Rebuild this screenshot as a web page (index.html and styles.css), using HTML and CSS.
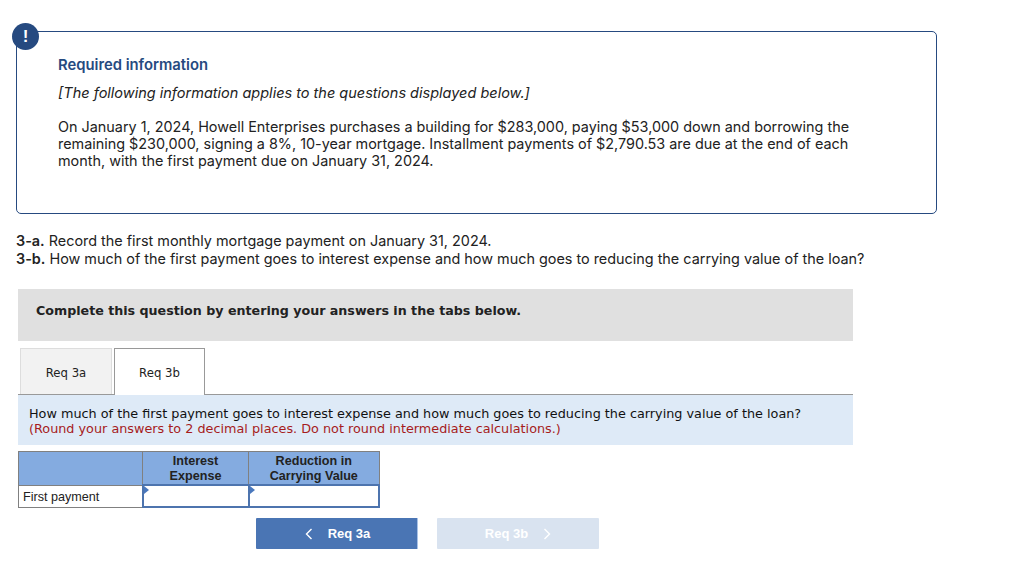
FILE: index.html
```html
<!DOCTYPE html>
<html lang="en">
<head>
    <meta charset="UTF-8">
    <title>Required information</title>
    <link rel="stylesheet" href="styles.css">
</head>
<body>
    <div class="info-box">
        <div class="info-badge">!</div>
        <div class="info-title">Required information</div>
        <p class="info-note">[The following information applies to the questions displayed below.]</p>
        <p class="info-text">On January 1, 2024, Howell Enterprises purchases a building for $283,000, paying $53,000 down and borrowing the remaining $230,000, signing a 8%, 10-year mortgage. Installment payments of $2,790.53 are due at the end of each month, with the first payment due on January 31, 2024.</p>
    </div>

    <div class="question">
        <div><b>3-a.</b> Record the first monthly mortgage payment on January 31, 2024.</div>
        <div><b>3-b.</b> How much of the first payment goes to interest expense and how much goes to reducing the carrying value of the loan?</div>
    </div>

    <div class="complete-bar">Complete this question by entering your answers in the tabs below.</div>

    <div class="tabs">
        <div class="tab">Req 3a</div>
        <div class="tab tab-active">Req 3b</div>
    </div>

    <div class="prompt">
        How much of the first payment goes to interest expense and how much goes to reducing the carrying value of the loan?<br>
        <span class="prompt-note">(Round your answers to 2 decimal places. Do not round intermediate calculations.)</span>
    </div>

    <table class="answer-table">
        <tr>
            <th class="col-label"></th>
            <th class="col-interest">Interest<br>Expense</th>
            <th class="col-reduction">Reduction in<br>Carrying Value</th>
        </tr>
        <tr>
            <td class="row-label">First payment</td>
            <td class="answer-cell"></td>
            <td class="answer-cell"></td>
        </tr>
    </table>

    <div class="nav-buttons">
        <div class="nav-button">
            <svg class="chevron" viewBox="0 0 8 12"><path d="M6.5 1L1.5 6l5 5"/></svg>
            <span>Req 3a</span>
        </div>
        <div class="nav-button nav-disabled">
            <span>Req 3b</span>
            <svg class="chevron" viewBox="0 0 8 12"><path d="M1.5 1l5 5-5 5"/></svg>
        </div>
    </div>
</body>
</html>
```

FILE: styles.css
```css
* {
    margin: 0;
    padding: 0;
    box-sizing: border-box;
}

body {
    font-family: 'Inter', 'Liberation Sans', sans-serif;
    background: #fff;
    color: #222;
    padding: 31px 0 0 16px;
    overflow: hidden;
}

/* Required information box */
.info-box {
    position: relative;
    width: 921px;
    height: 183px;
    border: 1px solid #264a80;
    border-radius: 5px;
    padding: 24px 40px 0 41px;
    font-size: 14.4px;
}

.info-badge {
    position: absolute;
    top: -9px;
    left: -5px;
    width: 27px;
    height: 27px;
    border-radius: 50%;
    background: #264a80;
    color: #fff;
    font-family: 'Liberation Sans', sans-serif;
    font-size: 17px;
    font-weight: 700;
    line-height: 27px;
    text-align: center;
}

.info-title {
    color: #264a80;
    font-size: 14.8px;
    font-weight: 600;
    line-height: 18px;
}

.info-note {
    margin-top: 10px;
    font-size: 14.5px;
    font-style: italic;
    line-height: 18px;
}

.info-text {
    margin-top: 16px;
    line-height: 17px;
}

/* Question text */
.question {
    margin-top: 18px;
    font-size: 14.4px;
    line-height: 18px;
}

.question b {
    font-weight: 600;
}

/* Grey bar */
.complete-bar {
    width: 835px;
    height: 52px;
    margin: 21px 0 0 2px;
    padding-left: 18px;
    background: #e0e0e0;
    font-family: 'DejaVu Sans', sans-serif;
    font-size: 12.66px;
    font-weight: 700;
    line-height: 43px;
}

/* Tabs */
.tabs {
    display: flex;
    gap: 2px;
    width: 835px;
    height: 47px;
    margin: 7px 0 0 2px;
    border-bottom: 1px solid #999;
}

.tab {
    width: 92px;
    height: 46px;
    border: 1px solid #ddd;
    border-bottom: none;
    background: #f2f2f2;
    margin-left: 2px;
    font-family: 'DejaVu Sans', sans-serif;
    font-size: 11.7px;
    line-height: 48px;
    text-align: center;
}

.tab-active {
    width: 91px;
    height: 47px;
    margin-left: 0;
    border-color: #999;
    background: #fff;
}

/* Blue prompt */
.prompt {
    width: 835px;
    height: 50px;
    margin-left: 2px;
    padding: 11px 0 0 11px;
    background: #deeaf7;
    font-family: 'DejaVu Sans', sans-serif;
    font-size: 12.8px;
    line-height: 15px;
    color: #111;
}

.prompt-note {
    color: #a61c1c;
}

/* Answer table */
.answer-table {
    margin: 6px 0 0 2px;
    border-collapse: collapse;
    table-layout: fixed;
    width: 362px;
    font-family: 'Liberation Sans', sans-serif;
    font-size: 12.6px;
}

.answer-table th {
    height: 33px;
    padding-top: 2px;
    background: #84abe0;
    border: 1px solid #808080;
    color: #222;
    line-height: 15px;
    font-weight: 700;
}

.col-label {
    width: 124px;
}

.col-interest {
    width: 106px;
}

.row-label {
    height: 22px;
    padding: 1px 0 0 4px;
    border: 1px solid #808080;
}

.answer-cell {
    position: relative;
    border: 2px solid #4d74ae;
}

.answer-cell::before {
    content: "";
    position: absolute;
    top: 0;
    left: 0;
    border-left: 5px solid #4a78bd;
    border-top: 4px solid transparent;
    border-bottom: 4px solid transparent;
}

/* Bottom buttons */
.nav-buttons {
    display: flex;
    gap: 19px;
    margin: 10px 0 0 240px;
}

.nav-button {
    display: flex;
    align-items: center;
    justify-content: center;
    gap: 15px;
    width: 162px;
    height: 31px;
    padding-left: 2px;
    background: #4a75b4;
    border-right: 1px solid #a9c2e6;
    border-radius: 1px;
    color: #fff;
    font-family: 'Liberation Sans', sans-serif;
    font-size: 13px;
    font-weight: 700;
}

.nav-disabled {
    padding-left: 0;
    background: #d9e3f0;
    border-right: none;
}

.chevron {
    width: 8px;
    height: 12px;
    fill: none;
    stroke: #fff;
    stroke-width: 1.4;
}
```
